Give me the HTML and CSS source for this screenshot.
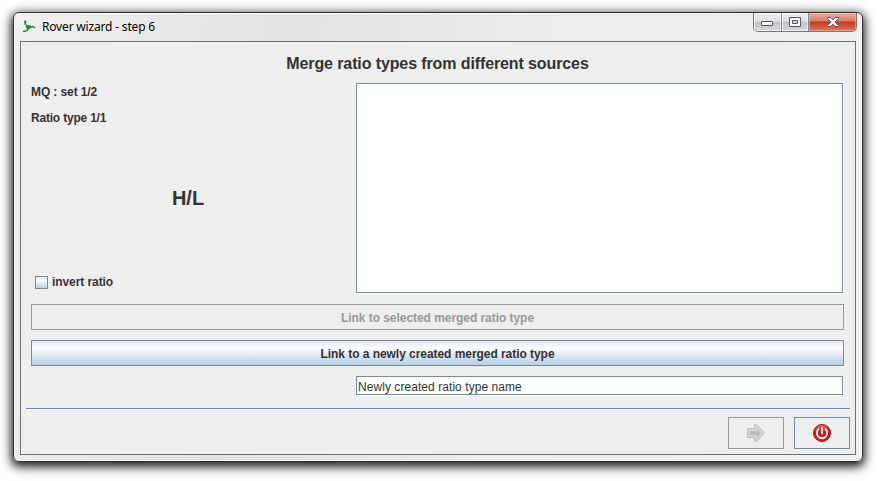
FILE: index.html
```html
<!DOCTYPE html>
<html lang="en">
<head>
<meta charset="utf-8">
<title>Rover wizard - step 6</title>
<link rel="stylesheet" href="styles.css">
</head>
<body>
<div class="window">
  <header class="titlebar">
    <svg class="app-icon" width="16" height="16" viewBox="0 0 16 16" fill="none" stroke="#16873b" stroke-width="1.5"><path d="M3 2.500h2.500M4.500 3l-.5 2 3 2.500M2 12.500l3.500-.5 2-2.500M10 8l3-.5 1 1.500" stroke-dasharray="3 .5"/><path d="M4.500 7l3-1 3 1-1 2.500-3 1z" fill="#16873b" stroke="none"/></svg>
    <span class="caption">Rover wizard - step 6</span>
    <div class="controls">
      <span class="ctl min"><svg width="13" height="6" viewBox="0 0 13 6"><rect x=".5" y=".5" width="11" height="4" rx=".5" fill="#fff" stroke="#55566b"/></svg></span>
      <span class="ctl max"><svg width="12" height="10" viewBox="0 0 12 10"><path d="M.5.5h11v9H.5z" fill="#fff" stroke="#55566b"/><path d="M3.5 3.5h5v3h-5z" fill="#d0d1d8" stroke="#55566b"/></svg></span>
      <span class="ctl close"><svg width="12" height="10" viewBox="0 0 12 10"><path d="M.5.5h3.3L6 2.8 8.2.5h3.3v1L8.1 5l3.4 3.5v1H8.2L6 7.2 3.8 9.5H.5v-1L3.9 5 .5 1.5z" fill="#fff" stroke="#55566b"/></svg></span>
    </div>
  </header>
  <main class="client">
    <h1><span>Merge ratio types from different sources</span></h1>
    <section class="merge">
      <div class="ratio">
        <p class="set">MQ : set 1/2</p>
        <p class="type">Ratio type 1/1</p>
        <p class="name">H/L</p>
        <label class="invert"><i class="box"></i><span>invert ratio</span></label>
      </div>
      <div class="list"></div>
    </section>
    <button class="link" disabled>Link to selected merged ratio type</button>
    <button class="link primary">Link to a newly created merged ratio type</button>
    <div class="field"><span>Newly created ratio type name</span></div>
    <hr>
    <footer>
      <button class="nav off" aria-label="Next"><svg width="18" height="18" viewBox="0 0 18 18"><path d="M.5 4.500h7V.5h2l8 8.500-8 8.500h-2v-4h-7z" fill="#d5d5d5" stroke="#bdbdbd"/><path d="M3 7h7V4.500L14 9l-4 4.500V11H3z" fill="#bdbdbd"/></svg></button>
      <button class="nav" aria-label="Quit"><svg width="18" height="18" viewBox="0 0 18 18"><defs><linearGradient id="r" x2="0" y2="1"><stop stop-color="#e8696b"/><stop offset=".5" stop-color="#cc1417"/><stop offset="1" stop-color="#e01d20"/></linearGradient></defs><circle cx="9" cy="9" r="8.500" fill="url(#r)" stroke="#ad0b10"/><path d="M5.500 5.200a5.200 5.200 0 1 0 7 0M9 4v5.500" fill="none" stroke="#fff" stroke-width="1.800" stroke-linecap="round"/></svg></button>
    </footer>
  </main>
</div>
</body>
</html>
```
FILE: styles.css
```css
* { box-sizing: border-box; }
body { margin: 0; padding: 12px 0 0 13px; width: 880px; height: 481px; overflow: hidden; background: #fff; color: #333; font: bold 12px/14px "Liberation Sans", Arial, sans-serif; }
h1, p { margin: 0; }
.window { width: 850px; height: 450px; padding: 0 6px; border: 1px solid #303030; border-radius: 6px; background: linear-gradient(100deg, #f0f0f0, #e2e2e2 30%, #ededed 60%, #f0f0f0); box-shadow: inset 0 0 0 1px #fafafa, 0 3px 9px 1px rgba(0,0,0,.8), 0 3px 14px 2px rgba(0,0,0,.35); }
.titlebar { display: flex; height: 28px; padding-left: 1px; }
.app-icon { margin-top: 6px; }
.caption { margin: 6px 0 0 5px; color: #000; font: 12px/16px "Noto Sans", "Open Sans", sans-serif; letter-spacing: -.18px; white-space: nowrap; }
.controls { display: flex; margin-left: auto; width: 104px; height: 19px; margin-right: -1px; border: 1px solid #77777d; border-top: 0; border-radius: 0 0 5px 5px; overflow: hidden; }
.ctl { display: flex; align-items: center; justify-content: center; width: 28px; border-right: 1px solid #88888f; background: linear-gradient(#f2f2f3, #dcdcde 48%, #bfc0c5 50%, #d9dadd); box-shadow: inset 0 0 0 1px rgba(255,255,255,.6); }
.max { width: 27px; }
.min svg { margin-top: 4px; }
.close { width: 47px; border-right: 0; background: linear-gradient(#eab0a2, #d9796a 45%, #c23a20 50%, #df7857); box-shadow: inset 0 0 0 1px rgba(255,200,180,.5); }
.client { width: 836px; height: 414px; padding: 12px 11px 0 10px; border: 1px solid #707070; background: #eee; display: flex; flex-direction: column; }
h1 { height: 29px; font-size: 16px; line-height: 20px; letter-spacing: -.11px; text-align: center; }
.merge { display: grid; grid-template-columns: 325px 487px; height: 210px; }
.ratio { display: flex; flex-direction: column; }
.set { padding-top: 2px; height: 28px; letter-spacing: -.1px; }
.type { height: 14px; letter-spacing: -.2px; }
.name { width: 314px; margin-top: 61px; font-size: 20px; line-height: 24px; text-align: center; }
.invert { display: flex; align-items: center; gap: 4px; margin: 65px 0 0 4px; letter-spacing: -.08px; }
.box { width: 13px; height: 13px; border: 1px solid #7a8a99; background: linear-gradient(#dde8f3, #fff 30%, #b8cfe5); }
.list, .field { background: #fff; border: 1px solid #7a8a99; box-shadow: 1px 1px #fff; }
button { font: inherit; color: inherit; padding: 0; }
.link { width: 813px; height: 26px; margin-top: 11px; padding-top: 1px; border: 1px solid #999; background: #eee; color: #999; letter-spacing: -.05px; flex: none; }
.link.primary { margin-top: 10px; border-color: #7a8a99; color: #333; background: linear-gradient(#dde8f3, #fff 30%, #dde8f3 60%, #b8cfe5); }
.field { margin: 10px 0 0 325px; width: 487px; height: 19px; padding: 3px 0 0 1px; font-weight: normal; line-height: 14px; letter-spacing: .06px; white-space: nowrap; }
hr { width: 824px; height: 2px; margin: 13px 0 0 -5px; border: 0; border-top: 1px solid #6382bf; background: #fff; flex: none; }
footer { display: flex; justify-content: flex-end; gap: 10px; margin: 7px -6px 0 0; }
.nav { display: flex; align-items: center; justify-content: center; width: 56px; height: 32px; border: 1px solid #7a8a99; background: #eee; }
.nav.off { border-color: #999; }
```
